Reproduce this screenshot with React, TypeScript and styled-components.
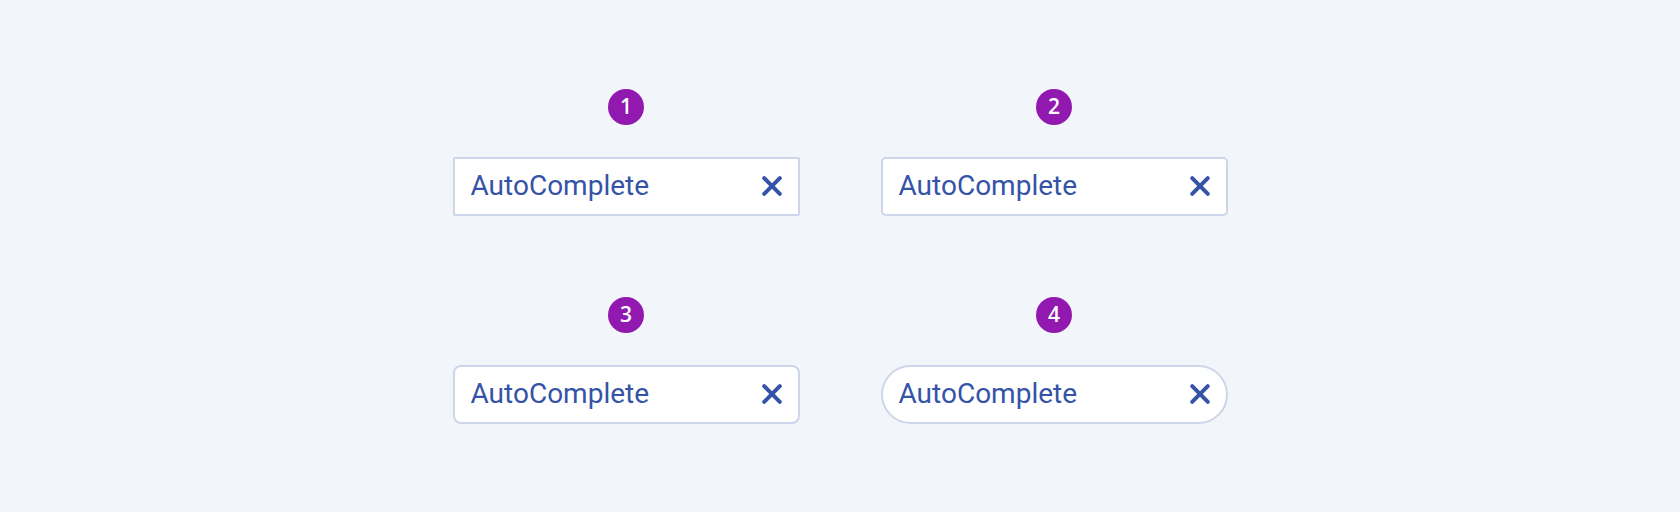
import React from "react";
import styled, { createGlobalStyle } from "styled-components";

const GlobalStyle = createGlobalStyle`
  html, body {
    margin: 0;
    padding: 0;
    background: #f2f5fa;
  }
  body {
    font-family: Roboto, "Liberation Sans", sans-serif;
  }
`;

const Page = styled.div`
  width: 1680px;
  height: 512px;
  display: flex;
  align-items: center;
  justify-content: center;
  background: #f2f5fa;
`;

const Grid = styled.div`
  display: grid;
  grid-template-columns: repeat(2, 347px);
  column-gap: 81px;
  row-gap: 81px;
`;

const Cell = styled.div`
  display: flex;
  flex-direction: column;
  align-items: center;
  gap: 32px;
`;

const Badge = styled.div`
  width: 36px;
  height: 36px;
  border-radius: 50%;
  background: #9119af;
  color: #ffffff;
  display: flex;
  align-items: center;
  justify-content: center;
  font-family: "Open Sans", "Noto Sans", sans-serif;
  font-size: 21px;
  font-weight: 600;
  line-height: 1;
`;

const Field = styled.div<{ $radius: number }>`
  box-sizing: border-box;
  width: 347px;
  height: 59px;
  border: 2px solid #cdd5ea;
  border-radius: ${(p) => p.$radius}px;
  background: #ffffff;
  display: flex;
  align-items: center;
  justify-content: space-between;
  padding: 0 15px 0 16px;
`;

const Value = styled.span`
  font-family: Roboto, "Liberation Sans", sans-serif;
  font-size: 28px;
  color: #3553a7;
  line-height: 1;
`;

const ClearButton = styled.span`
  display: flex;
  align-items: center;
  justify-content: center;
  width: 22px;
  height: 22px;
  color: #3553a7;
`;

const ClearIcon = () => (
  <svg width="22" height="22" viewBox="0 0 22 22" fill="none">
    <path
      d="M3.2 3.2 L18.8 18.8 M18.8 3.2 L3.2 18.8"
      stroke="currentColor"
      strokeWidth="4"
      strokeLinecap="round"
    />
  </svg>
);

const items = [
  { n: 1, radius: 2 },
  { n: 2, radius: 5 },
  { n: 3, radius: 8 },
  { n: 4, radius: 30 },
];

export default function App() {
  return (
    <>
      <GlobalStyle />
      <Page>
        <Grid>
          {items.map((it) => (
            <Cell key={it.n}>
              <Badge>{it.n}</Badge>
              <Field $radius={it.radius}>
                <Value>AutoComplete</Value>
                <ClearButton>
                  <ClearIcon />
                </ClearButton>
              </Field>
            </Cell>
          ))}
        </Grid>
      </Page>
    </>
  );
}
